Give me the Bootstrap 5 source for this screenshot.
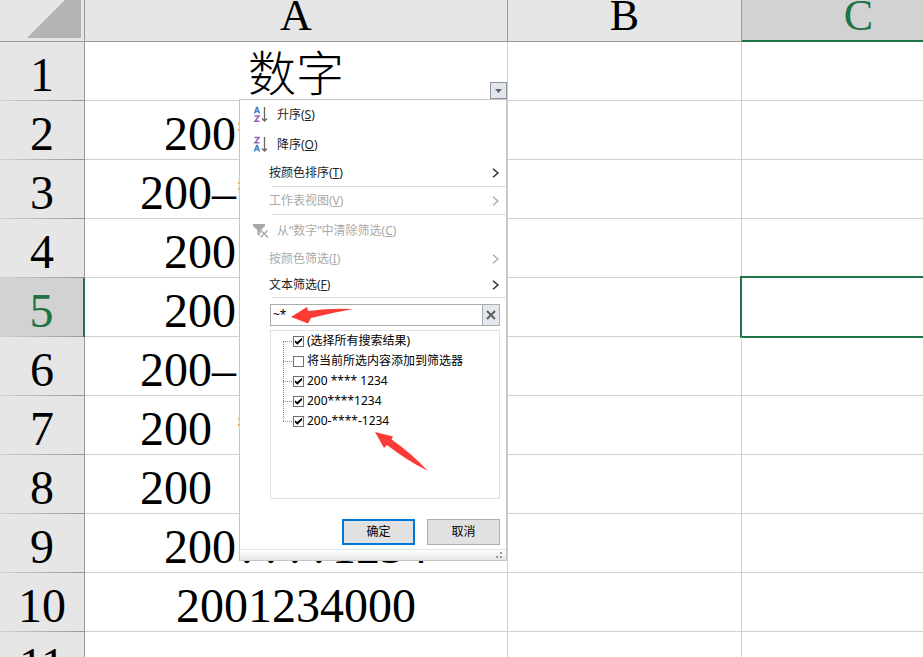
<!DOCTYPE html>
<html lang="zh-CN">
<head>
<meta charset="utf-8">
<meta name="viewport" content="width=device-width, initial-scale=1">
<title>数字筛选</title>
<link rel="stylesheet" href="https://cdn.jsdelivr.net/npm/bootstrap@5.3.0/dist/css/bootstrap.min.css">
<style>
:root { --xl-green: #217346; --xl-head: #e6e6e6; --xl-line: #d0d0d0; --xl-edge: #999; }
body { background: #fff; color: #000; }
.sheet { font-family: "Liberation Serif", "Noto Sans CJK SC", serif; font-size: 48px; line-height: 51px; table-layout: fixed; border-collapse: separate; border-spacing: 0; width: 100%; min-width: 976px; }
.sheet th, .sheet td { padding: 7px 0 0; font-weight: 400; text-align: center; white-space: nowrap; vertical-align: top; border: solid var(--xl-line); border-width: 0 1px 1px 0; position: relative; }
.sheet thead th { background: var(--xl-head); border-color: var(--xl-edge); padding: 0 0 9px; font-size: 44px; line-height: 32px; }
.sheet tbody th { background: linear-gradient(90deg, #d0d0d0, #999) bottom / 100% 1px no-repeat var(--xl-head); border-color: var(--xl-edge); border-bottom: 0; padding-bottom: 1px; }
.sheet .head-on { background-color: #d2d2d2; color: var(--xl-green); }
.sheet thead .head-on { border-bottom: 2px solid var(--xl-green); padding-bottom: 8px; }
.sheet tbody .head-on { border-right: 2px solid var(--xl-green); }
.w-rowhead { width: 85px; } .w-first { width: 423px; } .w-std { width: 234px; }
.digit { display: inline-block; width: 24px; }
.light-cjk { font-weight: 300 !important; }
.selected-cell::after { content: ""; position: absolute; inset: -2px -1px -2px -2px; border: 2px solid var(--xl-green); }
.corner svg { display: block; margin-left: 27px; }
.sheet thead th.corner { padding: 0; line-height: 0; }
.filter-btn { right: 0; bottom: 1px; width: 17px; height: 17px; background: #e1e5ec; border: 1px solid #8f939c; line-height: 0; }

.filter-menu { left: 239px; top: 99px; width: 268px; background: #fff; border: 1px solid #c6c6c6; box-shadow: 1px 0 0 #ccc; font: 12px/18px "Noto Sans", "Noto Sans CJK SC", sans-serif; }
.menu-row { border: 0; background: none; color: #222; padding: 0 6px 0 29px; text-align: left; height: 26px; }
.menu-row.with-icon { padding-left: 13px; height: 30px; }
.menu-row.with-icon:disabled { height: 31px; }
.menu-row:disabled { color: #aaa; height: 27px; }
.menu-row:disabled + .menu-row:disabled { height: 26px; }
.menu-row:disabled + .menu-row:enabled { height: 25px; }
.menu-row svg { flex: none; }
.rule { border-top: 1px solid #dcdcdc; margin-left: 32px; }
.menu-body { padding: 6px 6px 4px 30px; }
.search-box { height: 22px; border: 1px solid #ababab; }
.search-box input { border: 0; outline: 0; padding: 0 0 1px 2px; min-width: 0; color: #000; }
.search-box button { width: 17px; border: 0; border-left: 1px solid #ababab; background: #e3e7ee; line-height: 0; }
.pick-list { height: 169px; border: 1px solid #e1e1e3; margin-top: 4px; margin-bottom: 20px; padding: 0 0 0 12px; }
.pick-list li { height: 20px; position: relative; padding-left: 10px; }
.pick-list li::before { content: ""; position: absolute; left: 0; top: 10px; width: 9px; border-top: 1px dotted #888; }
.pick-list li + li::after { content: ""; position: absolute; left: 0; top: -10px; height: 20px; border-left: 1px dotted #888; }
.pick-list label { gap: 3px; height: 20px; white-space: nowrap; }
.pick-list input { appearance: none; width: 11px; height: 11px; border: 1px solid #707070; background: #fff; margin: 0; flex: none; }
.pick-list input:checked::before { content: ""; display: block; width: 9px; height: 9px; background: #000; clip-path: polygon(10% 42%, 35% 62%, 90% 10%, 90% 38%, 38% 92%, 10% 68%); }
.act { width: 73px; height: 26px; background: #e1e1e1; border: 1px solid #adadad; padding: 0; color: #000; }
.act-main { border: 2px solid #0078d7; }
.grip { height: 11px; border-top: 1px solid #dbe5ec; background: linear-gradient(#fff, #e4e6e8); padding: 2px 3px 0 0; line-height: 0; }
.note { pointer-events: none; fill: #fc3a36; }
.note-search { left: 51px; top: 206px; }
.note-list { left: 134px; top: 331px; }
</style>
<script src="https://cdn.jsdelivr.net/npm/bootstrap@5.3.0/dist/js/bootstrap.bundle.min.js"></script>
</head>
<body>
<main class="position-relative vh-100 overflow-hidden">
<table class="sheet">
<colgroup><col class="w-rowhead"><col class="w-first"><col class="w-std"><col class="w-std"><col></colgroup>
<thead>
<tr><th class="corner" aria-label="全选"><svg width="54" height="41"><path d="M0 38 38 0H54V38z" fill="#b3b3b3"/></svg></th><th scope="col">A</th><th scope="col">B</th><th scope="col" class="head-on">C</th><th></th></tr>
</thead>
<tbody>
<tr><th scope="row">1</th><td class="light-cjk">数字<button type="button" class="filter-btn position-absolute p-0 d-flex align-items-center justify-content-center" aria-label="筛选"><svg width="7" height="4"><path d="M0 0H7L3.500 4z" fill="#5c6068"/></svg></button></td><td></td><td></td><td></td></tr>
<tr><th scope="row">2</th><td>200****1234</td><td></td><td></td><td></td></tr>
<tr><th scope="row">3</th><td>200–****–1234</td><td></td><td></td><td></td></tr>
<tr><th scope="row">4</th><td>200&ensp;&ensp;&ensp;&ensp;1234</td><td></td><td></td><td></td></tr>
<tr><th scope="row" class="head-on">5</th><td>200&ensp;&ensp;&ensp;&ensp;1234</td><td></td><td class="selected-cell"></td><td></td></tr>
<tr><th scope="row">6</th><td>200–&ensp;&ensp;&ensp;&ensp;–1234</td><td></td><td></td><td></td></tr>
<tr><th scope="row">7</th><td>200&ensp;****&ensp;1234</td><td></td><td></td><td></td></tr>
<tr><th scope="row">8</th><td>200&ensp;<span class="digit">?</span><span class="digit">?</span><span class="digit">?</span><span class="digit">?</span>&ensp;1234</td><td></td><td></td><td></td></tr>
<tr><th scope="row">9</th><td>200<span class="digit">?</span><span class="digit">?</span><span class="digit">?</span><span class="digit">?</span>1234</td><td></td><td></td><td></td></tr>
<tr><th scope="row">10</th><td>2001234000</td><td></td><td></td><td></td></tr>
<tr><th scope="row">11</th><td></td><td></td><td></td><td></td></tr>
</tbody>
</table>

<section class="filter-menu position-absolute d-flex flex-column" aria-label="筛选菜单">
<button type="button" class="menu-row with-icon d-flex align-items-center gap-2"><svg width="16" height="18" fill="none"><path d="M1.500 7.500 3.700 1.500H4.300L6.500 7.500M2.500 5.500H5.500" stroke="#3f83c1" stroke-width="1.500"/><path d="M1.500 10H6L2 15.300H6.500" stroke="#9561b8" stroke-width="1.500"/><path d="M11.500 1V15M9 12.500 11.500 15 14 12.500" stroke="#666" stroke-width="1.300"/></svg><span>升序(<u>S</u>)</span></button>
<button type="button" class="menu-row with-icon d-flex align-items-center gap-2"><svg width="16" height="18" fill="none"><path d="M1.500 1.500H6L2 6.800H6.500" stroke="#9561b8" stroke-width="1.500"/><path d="M1.500 15.500 3.700 9.500H4.300L6.500 15.500M2.500 13.500H5.500" stroke="#3f83c1" stroke-width="1.500"/><path d="M11.500 1V15M9 12.500 11.500 15 14 12.500" stroke="#666" stroke-width="1.300"/></svg><span>降序(<u>O</u>)</span></button>
<button type="button" class="menu-row d-flex align-items-center justify-content-between"><span>按颜色排序(<u>T</u>)</span><svg width="8" height="10" fill="none" stroke="currentColor" stroke-width="1.300"><path d="M1 .7 6 5 1 9.300"/></svg></button>
<div class="rule"></div>
<button type="button" disabled class="menu-row d-flex align-items-center justify-content-between"><span>工作表视图(<u>V</u>)</span><svg width="8" height="10" fill="none" stroke="currentColor" stroke-width="1.300"><path d="M1 .7 6 5 1 9.300"/></svg></button>
<div class="rule"></div>
<button type="button" disabled class="menu-row with-icon d-flex align-items-center gap-2"><svg width="16" height="16"><path d="M0 1H12V3L8 7V11L4.500 8V7L0 3z" fill="#a6a6a6"/><path d="M5 8V11L7 12" fill="none" stroke="#a6a6a6" stroke-width="1.400"/><path d="M8 7.500 15 14.500M14.500 7.500 7.500 14.500" stroke="#fff" stroke-width="3"/><path d="M8 7.500 15 14.500M14.500 7.500 7.500 14.500" stroke="#a6a6a6" stroke-width="1.400"/></svg><span>从“数字”中清除筛选(<u>C</u>)</span></button>
<button type="button" disabled class="menu-row d-flex align-items-center justify-content-between"><span>按颜色筛选(<u>I</u>)</span><svg width="8" height="10" fill="none" stroke="currentColor" stroke-width="1.300"><path d="M1 .7 6 5 1 9.300"/></svg></button>
<button type="button" class="menu-row d-flex align-items-center justify-content-between"><span>文本筛选(<u>F</u>)</span><svg width="8" height="10" fill="none" stroke="currentColor" stroke-width="1.300"><path d="M1 .7 6 5 1 9.300"/></svg></button>
<div class="rule"></div>
<div class="menu-body">
<div class="search-box d-flex"><input type="text" class="flex-grow-1" value="~*" aria-label="搜索"><button type="button" class="p-0 d-flex align-items-center justify-content-center" aria-label="清除搜索"><svg width="10" height="10"><path d="M1 1 9 9M9 1 1 9" stroke="#606060" stroke-width="2"/></svg></button></div>
<ul class="pick-list list-unstyled">
<li><label class="d-flex align-items-center"><input type="checkbox" checked>(选择所有搜索结果)</label></li>
<li><label class="d-flex align-items-center"><input type="checkbox">将当前所选内容添加到筛选器</label></li>
<li><label class="d-flex align-items-center"><input type="checkbox" checked>200 **** 1234</label></li>
<li><label class="d-flex align-items-center"><input type="checkbox" checked>200****1234</label></li>
<li><label class="d-flex align-items-center"><input type="checkbox" checked>200-****-1234</label></li>
</ul>
<div class="d-flex justify-content-end">
<button type="button" class="act act-main me-2">确定</button>
<button type="button" class="act ms-1">取消</button>
</div>
</div>
<div class="grip text-end"><svg width="7" height="7" fill="#999"><path d="M4 0H6V2H4zM0 4H2V6H0zM4 4H6V6H4z"/></svg></div>
<svg class="note note-search position-absolute" width="64" height="20"><path d="M0 11 16 1 17 5Q40 2 62 3Q40 7 20 12L17 17.500z"/></svg>
<svg class="note note-list position-absolute" width="56" height="42"><path d="M1 1 19 5.500 17.500 8.500Q36 21 54 40Q32 29 13 14L10 17z"/></svg>
</section>
</main>
</body>
</html>
